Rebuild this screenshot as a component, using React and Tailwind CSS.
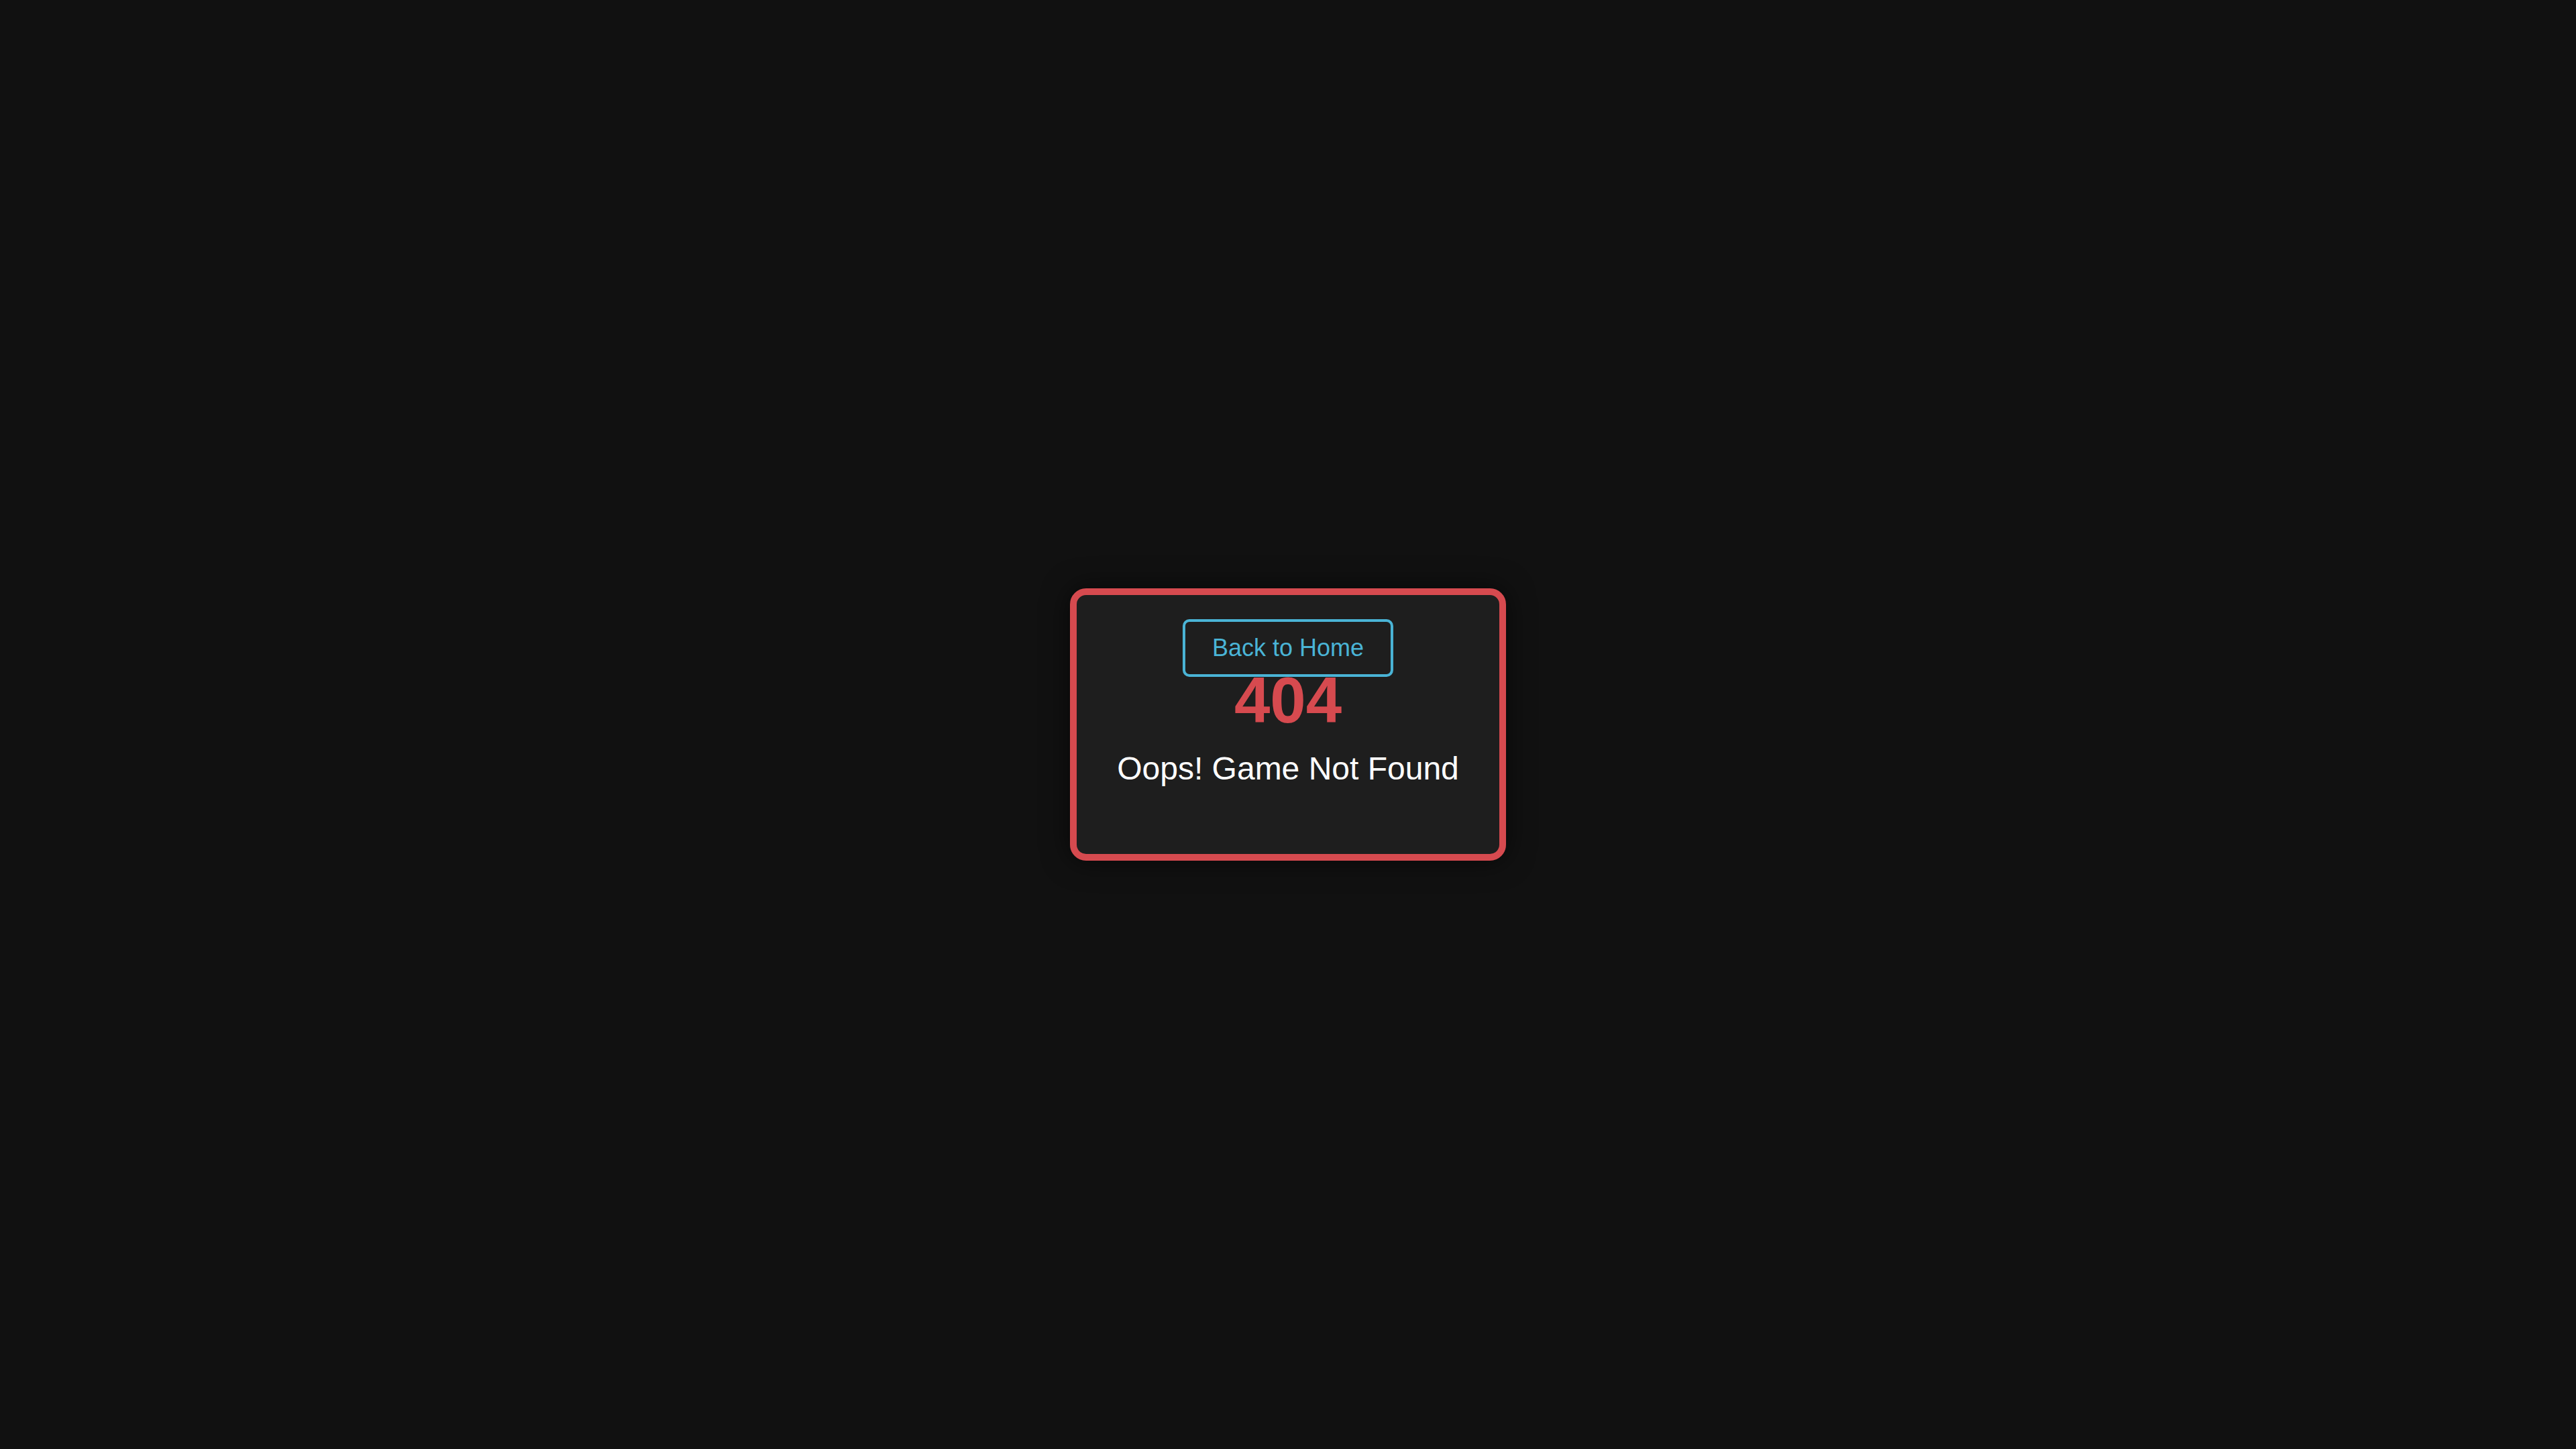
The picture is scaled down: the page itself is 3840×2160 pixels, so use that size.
import React from 'react';

const App = () => {
  return (
    <div className="min-h-screen w-full flex items-center justify-center bg-[#111111] font-['Liberation_Sans',Arial,sans-serif]">
      {/* 404 card */}
      <div className="relative w-[650px] flex flex-col items-center pt-[102px] pb-[100px] bg-[#1e1e1e] border-[10px] border-[#d64a4f] rounded-[24px] shadow-[0_0_40px_rgba(0,0,0,0.6)]">
        <button className="absolute top-[36px] left-1/2 -translate-x-1/2 px-[40px] py-[19px] border-4 border-[#4ab4d6] rounded-[10px] bg-transparent text-[#4ab4d6] text-[36px] leading-[40px] whitespace-nowrap">
          Back to Home
        </button>
        <h1 className="text-[96px] leading-[110px] font-bold text-[#d64a4f]">404</h1>
        <p className="mt-[19px] text-[48px] leading-[55px] text-white">Oops! Game Not Found</p>
      </div>
    </div>
  );
};

export default App;
